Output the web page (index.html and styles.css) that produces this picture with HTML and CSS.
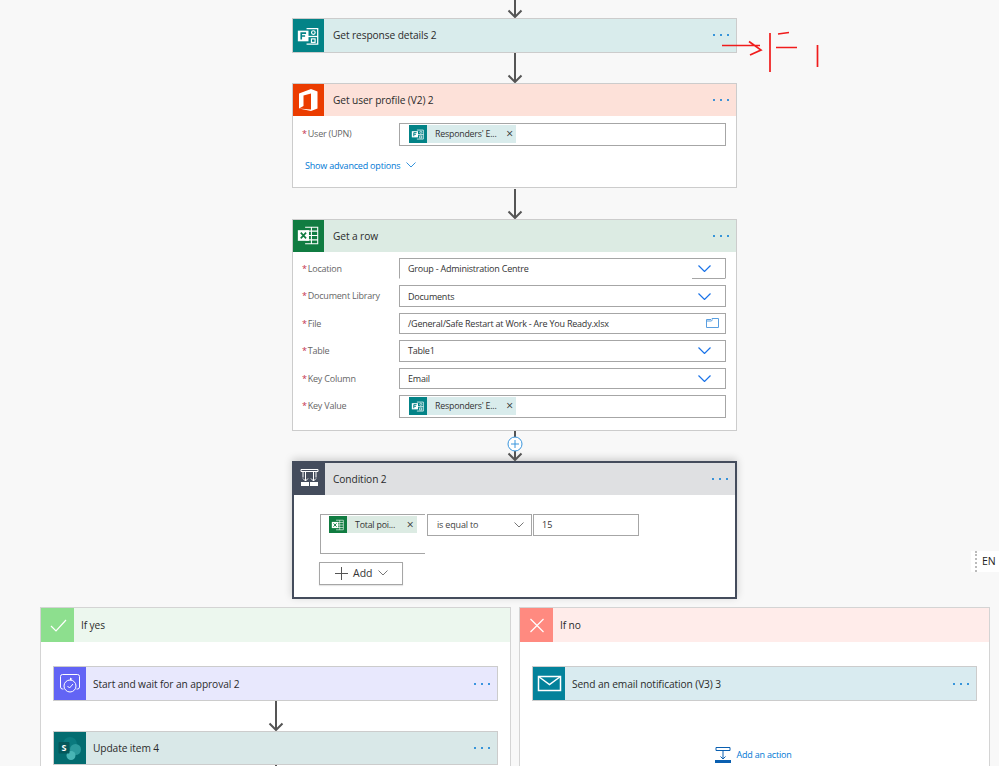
FILE: index.html
```html
<!DOCTYPE html>
<html lang="en">
<head>
<meta charset="utf-8">
<title>Flow</title>
<link rel="stylesheet" href="styles.css">
</head>
<body>
<svg class="defs" width="0" height="0" aria-hidden="true">
  <symbol id="i-forms" viewBox="0 0 32 32">
    <path d="M14 9h11.500v16H14" fill="none" stroke="#fff" stroke-width="1.300"/>
    <path d="M15 17h10.500" stroke="#fff" stroke-width="1.300"/>
    <circle cx="21" cy="13" r="1.900" fill="none" stroke="#fff" stroke-width="1.200"/>
    <rect x="19" y="19.500" width="3.800" height="3.600" fill="none" stroke="#fff" stroke-width="1.200"/>
    <rect x="5" y="11" width="11" height="11" fill="#fff"/>
    <path d="M8.500 20v-6.500h5M8.500 16.500h4" fill="none" stroke="#038387" stroke-width="1.700"/>
  </symbol>
  <symbol id="i-excel" viewBox="0 0 32 32">
    <path d="M12.500 7.500h13v17h-13M19 7.500v17M13 11.500h12.500M13 16h12.500M13 20.500h12.500" fill="none" stroke="#fff" stroke-width="1.100"/>
    <rect x="5" y="10.500" width="11.500" height="11" fill="#fff"/>
    <path d="M8 13l5.500 6M13.500 13L8 19" stroke="#107c41" stroke-width="1.700"/>
  </symbol>
  <symbol id="i-chev" viewBox="0 0 13 7">
    <path d="M.5.500l6 6 6-6" fill="none" stroke="#1a73e8" stroke-width="1.200"/>
  </symbol>
</svg>

<main class="canvas">
  <div class="column">
    <div class="conn conn-top"><svg class="arrow" width="16" height="18" viewBox="0 0 16 18"><path d="M8 0v17M1.500 10.500L8 17l6.500-6.500" fill="none" stroke="#555" stroke-width="2"/></svg></div>

    <section class="card">
      <header class="head head-forms">
        <span class="badge badge-forms"><svg width="31" height="33"><use href="#i-forms"/></svg></span>
        <span class="title">Get response details 2</span>
        <span class="dots"><i></i><i></i><i></i></span>
      </header>
    </section>

    <div class="conn"><svg class="arrow" width="16" height="30" viewBox="0 0 16 30"><path d="M8 0v29M1.500 22.500L8 29l6.500-6.500" fill="none" stroke="#555" stroke-width="2"/></svg></div>

    <section class="card">
      <header class="head head-office">
        <span class="badge badge-office"><svg width="31" height="33" viewBox="0 0 31 33"><path d="M6 25.500V10.500L18 6l6.500 2.500v17L18 28 6 25.500l12 1V10.500l-7.500 2v10.500z" fill="#fff" fill-rule="evenodd"/></svg></span>
        <span class="title">Get user profile (V2) 2</span>
        <span class="dots"><i></i><i></i><i></i></span>
      </header>
      <div class="body body-profile">
        <div class="row">
          <label class="label"><em>*</em>User (UPN)</label>
          <div class="field field-token">
            <span class="token"><span class="token-ic"><svg width="18" height="18" viewBox="0 0 32 32"><use href="#i-forms"/></svg></span><span class="token-text">Responders' E...</span><span class="token-x">×</span></span>
          </div>
        </div>
        <a class="advanced">Show advanced options <svg width="10" height="6" viewBox="0 0 10 6"><path d="M.5.500L5 5l4.500-4.500" fill="none" stroke="#0078d4" stroke-width=".8"/></svg></a>
      </div>
    </section>

    <div class="conn conn-wide"><svg class="arrow" width="16" height="30" viewBox="0 0 16 30"><path d="M8 0v29M1.500 22.500L8 29l6.500-6.500" fill="none" stroke="#555" stroke-width="2"/></svg></div>

    <section class="card">
      <header class="head head-excel">
        <span class="badge badge-excel"><svg width="31" height="33"><use href="#i-excel"/></svg></span>
        <span class="title">Get a row</span>
        <span class="dots"><i></i><i></i><i></i></span>
      </header>
      <div class="body body-row">
        <div class="row">
          <label class="label"><em>*</em>Location</label>
          <div class="field field-open"><span class="val">Group - Administration Centre</span><span class="chev chev-under"><svg width="13" height="7"><use href="#i-chev"/></svg></span></div>
        </div>
        <div class="row">
          <label class="label"><em>*</em>Document Library</label>
          <div class="field"><span class="val">Documents</span><span class="chev"><svg width="13" height="7"><use href="#i-chev"/></svg></span></div>
        </div>
        <div class="row">
          <label class="label"><em>*</em>File</label>
          <div class="field"><span class="val">/General/Safe Restart at Work - Are You Ready.xlsx</span><span class="chev chev-folder"><svg width="13" height="10" viewBox="0 0 13 10"><path d="M.5 9.500v-8h4.500l1-1h6.500v9zM.5 3h5l1-1.500" fill="none" stroke="#5a9fe0"/></svg></span></div>
        </div>
        <div class="row">
          <label class="label"><em>*</em>Table</label>
          <div class="field"><span class="val">Table1</span><span class="chev"><svg width="13" height="7"><use href="#i-chev"/></svg></span></div>
        </div>
        <div class="row">
          <label class="label"><em>*</em>Key Column</label>
          <div class="field"><span class="val">Email</span><span class="chev"><svg width="13" height="7"><use href="#i-chev"/></svg></span></div>
        </div>
        <div class="row">
          <label class="label"><em>*</em>Key Value</label>
          <div class="field field-token">
            <span class="token"><span class="token-ic"><svg width="18" height="18" viewBox="0 0 32 32"><use href="#i-forms"/></svg></span><span class="token-text">Responders' E...</span><span class="token-x">×</span></span>
          </div>
        </div>
      </div>
    </section>

    <div class="conn conn-plus">
      <svg class="arrow" width="16" height="30" viewBox="0 0 16 30"><path d="M8 0v29M1.500 22.500L8 29l6.500-6.500" fill="none" stroke="#555" stroke-width="2"/></svg>
      <svg class="plus" width="16" height="16" viewBox="0 0 16 16"><circle cx="8" cy="8" r="7" fill="#fff" stroke="#3a96dd"/><path d="M8 4v8M4 8h8" stroke="#3a96dd"/></svg>
    </div>

    <section class="card card-cond">
      <header class="head head-cond">
        <span class="badge badge-cond"><svg width="31" height="32" viewBox="0 0 31 32"><path d="M7 6.500h17v2H7zM9 8.500v6M22 8.500v6M11.500 8.500v9.500M19.500 8.500V18" fill="none" stroke="#fff"/><path d="M9 15.500l2.500 2.500 2.500-2.500M17 15.500l2.500 2.500 2.500-2.500" fill="none" stroke="#fff"/><rect x="7" y="19" width="8" height="4" fill="#fff"/><rect x="16" y="19" width="8" height="4" fill="#fff"/></svg></span>
        <span class="title">Condition 2</span>
        <span class="dots"><i></i><i></i><i></i></span>
      </header>
      <div class="body body-cond">
        <div class="cond-row">
          <div class="cond-left">
            <span class="token token-green"><span class="token-ic token-ic-green"><svg width="18" height="18" viewBox="0 0 32 32"><use href="#i-excel"/></svg></span><span class="token-text">Total poi...</span><span class="token-x">×</span></span>
          </div>
          <div class="cond-op"><span>is equal to</span><svg width="10" height="6" viewBox="0 0 10 6"><path d="M.5.500L5 5l4.500-4.500" fill="none" stroke="#777"/></svg></div>
          <div class="cond-val">15</div>
        </div>
        <div class="add-btn"><svg width="13" height="13" viewBox="0 0 13 13"><path d="M6.500 0v13M0 6.500h13" stroke="#555"/></svg><span>Add</span><svg width="10" height="6" viewBox="0 0 10 6"><path d="M.5.500L5 5l4.500-4.500" fill="none" stroke="#777"/></svg></div>
      </div>
    </section>
  </div>

  <div class="branches">
    <section class="branch">
      <header class="head head-yes">
        <span class="badge badge-yes"><svg width="32" height="33" viewBox="0 0 32 33"><path d="M9 17l5 5L24 11" fill="none" stroke="#fff" stroke-width="1.200"/></svg></span>
        <span class="title title-in">If yes</span>
      </header>
      <div class="branch-body">
        <section class="card">
          <header class="head head-approval">
            <span class="badge badge-approval"><svg width="32" height="33" viewBox="0 0 32 33"><path d="M9.500 22H8.500a2 2 0 0 1-2-2V9.500a2 2 0 0 1 2-2h15a2 2 0 0 1 2 2V20a2 2 0 0 1-2 2h-1" fill="none" stroke="#fff"/><circle cx="16" cy="19" r="6" fill="#6264f5" stroke="#fff"/><path d="M13.500 19l2 2 3.500-4" fill="none" stroke="#fff"/><path d="M16 10.500l2.500 1.500-2.500 1.500z" fill="#fff"/></svg></span>
            <span class="title title-in">Start and wait for an approval 2</span>
            <span class="dots"><i></i><i></i><i></i></span>
          </header>
        </section>
        <div class="conn-in"><svg class="arrow" width="16" height="30" viewBox="0 0 16 30"><path d="M8 0v29M1.500 22.500L8 29l6.500-6.500" fill="none" stroke="#555" stroke-width="2"/></svg></div>
        <section class="card">
          <header class="head head-sp">
            <span class="badge badge-sp"><svg width="32" height="33" viewBox="0 0 32 33"><circle cx="16" cy="12" r="7" fill="#0a7a7e"/><circle cx="21.500" cy="17.500" r="5.500" fill="#2b9a9c"/><circle cx="17" cy="23.500" r="4.500" fill="#48b5b5"/><rect x="4.500" y="10" width="11" height="11.500" rx="1" fill="#04585b"/><text class="sp-s" x="10" y="19">S</text></svg></span>
            <span class="title title-in">Update item 4</span>
            <span class="dots"><i></i><i></i><i></i></span>
          </header>
        </section>
        <div class="conn-in conn-tail"><svg width="16" height="4" viewBox="0 0 16 4"><path d="M8 0v4" stroke="#555" stroke-width="2"/></svg></div>
      </div>
    </section>

    <section class="branch">
      <header class="head head-no">
        <span class="badge badge-no"><svg width="32" height="33" viewBox="0 0 32 33"><path d="M9.500 10l13 13M22.500 10l-13 13" fill="none" stroke="#fff" stroke-width="1.200"/></svg></span>
        <span class="title title-in">If no</span>
      </header>
      <div class="branch-body">
        <section class="card">
          <header class="head head-mail">
            <span class="badge badge-mail"><svg width="32" height="33" viewBox="0 0 32 33"><path d="M5.500 9.500h22v14h-22z" fill="none" stroke="#fff" stroke-width="1.500"/><path d="M5.500 9.500l11 8 11-8" fill="none" stroke="#fff" stroke-width="1.500"/></svg></span>
            <span class="title title-in">Send an email notification (V3) 3</span>
            <span class="dots"><i></i><i></i><i></i></span>
          </header>
        </section>
        <a class="add-action"><svg width="16" height="16" viewBox="0 0 16 16"><path d="M1 .500h14v3H1zM8 3.500v8M5.500 9.500L8 12l2.500-2.500" fill="none" stroke="#0a5fb0"/><rect y="13" width="16" height="3" fill="#0a5fb0"/></svg><span>Add an action</span></a>
      </div>
    </section>
  </div>

  <div class="lang"><span>EN</span></div>

  <svg class="scribble" width="110" height="50" viewBox="0 0 110 50"><path d="M2 14.500h38M29 10.500l12 8.500-11 5M50 2v39M58 3l11-1.500M56 16.500h21M97.500 14v22" fill="none" stroke="#f01c1c" stroke-width="1.700"/></svg>
</main>
</body>
</html>
```
FILE: styles.css
```css
* { box-sizing: border-box; }
html, body { margin: 0; padding: 0; }
body {
  width: 999px;
  height: 766px;
  overflow: hidden;
  background: #f8f8f8;
  color: #2b2b2b;
  font-family: "Open Sans", "Noto Sans", sans-serif;
  font-size: 9px;
}
.defs { position: absolute; }
.canvas { position: relative; width: 999px; height: 766px; overflow: hidden; }

.column { width: 445px; margin-left: 292px; display: flex; flex-direction: column; }
.conn { height: 30px; display: flex; justify-content: center; position: relative; }
.conn-top { height: 18px; }
.conn-wide { height: 31px; align-items: flex-end; }
.conn-plus { height: 30px; align-items: flex-end; }
.arrow { display: block; }
.plus { position: absolute; left: 215px; top: 4.500px; }

.card { background: #fff; border: 1px solid #ccc; }
.card-cond { border: 2px solid #444c5c; height: 138px; box-shadow: 0 -2px 8px rgba(0,0,0,.18); }

.head { display: flex; align-items: center; height: 32.500px; }
.badge { width: 31px; height: 100%; flex: none; display: flex; align-items: center; justify-content: center; }
.badge svg { display: block; }
.title { margin-left: 9px; flex: 1; font-size: 10.200px; letter-spacing: -.1px; color: #2b2b2b; white-space: nowrap; }
.title-in { margin-left: 7px; }
.dots { display: flex; gap: 4.500px; margin-right: 7px; }
.dots i { width: 2.400px; height: 2.400px; border-radius: 50%; background: #0078d4; display: block; }

.head-forms { background: #d9ecec; }
.badge-forms { background: #038387; }
.head-office { background: #fde1d9; }
.badge-office { background: #eb3c00; }
.head-excel { background: #dcebe3; }
.badge-excel { background: #107c41; }
.head-cond { background: #dfe0e2; height: 31.500px; }
.head-cond .title { margin-left: 8px; }
.badge-cond { background: #444c5c; }
.head-yes { background: #ecf7ee; height: 34px; }
.badge-yes { background: #8ddf8e; width: 33px; }
.head-no { background: #ffecea; height: 34px; }
.badge-no { background: #ff8a80; width: 33px; }
.head-approval { background: #e8e8fd; }
.badge-approval { background: #6264f5; width: 32px; }
.head-sp { background: #d9e8e8; }
.badge-sp { background: #036c70; width: 32px; }
.head-mail { background: #d9ebf0; }
.badge-mail { background: #03829b; width: 32px; }
.sp-s { font-size: 9px; font-weight: 700; fill: #fff; text-anchor: middle; }

.body-profile { padding: 6.500px 10px 0 9px; height: 70.500px; }
.body-row { padding: 6px 10px 12.500px 9px; display: flex; flex-direction: column; gap: 6px; }
.row { display: flex; align-items: flex-start; }
.label { width: 97px; flex: none; padding-top: 4px; color: #666; font-size: 9px; letter-spacing: -.22px; white-space: nowrap; }
.label em { color: #c4314b; font-style: normal; margin-right: 1px; }
.field {
  flex: 1;
  height: 21.400px;
  border: 1px solid #a6a6a6;
  background: #fff;
  display: flex;
  align-items: center;
  padding-left: 8px;
  white-space: nowrap;
}
.val { flex: 1; font-size: 9px; letter-spacing: -.22px; color: #333; }
.chev { width: 33px; flex: none; align-self: stretch; display: flex; align-items: center; justify-content: center; padding-right: 8px; }
.chev svg { display: block; }
.chev-folder { justify-content: flex-end; padding-right: 6px; }
.field-open { border-bottom-color: transparent; }
.chev-under { border-bottom: 1px solid #a6a6a6; margin-bottom: -1px; }
.field-token { height: 23px; padding-left: 9px; align-items: flex-start; padding-top: 1.500px; }

.token { display: inline-flex; align-items: center; height: 17.500px; width: 107px; background: #d9ecec; flex: none; }
.token-ic { width: 18px; height: 17.500px; background: #038387; flex: none; display: block; }
.token-ic svg { display: block; }
.token-text { margin-left: 8px; font-size: 8.800px; letter-spacing: -.2px; color: #333; white-space: nowrap; }
.token-x { margin-left: auto; margin-right: 3px; font-size: 12px; line-height: 1; color: #333; }
.token-green { background: #dcebe3; width: 87.500px; }
.token-ic-green { background: #107c41; }

.advanced { display: flex; align-items: center; gap: 6px; margin: 13px 0 0 3px; color: #0078d4; font-size: 9px; letter-spacing: -.2px; white-space: nowrap; }

.body-cond { padding: 19px 0 0 26px; }
.cond-row { display: flex; align-items: flex-start; }
.cond-left {
  width: 105px;
  height: 40.500px;
  border: 1px solid #a6a6a6;
  border-right: 0;
  padding: 1px 0 0 8px;
}
.cond-op {
  width: 105px;
  height: 22px;
  margin-left: 2px;
  border: 1px solid #a6a6a6;
  display: flex;
  align-items: center;
  justify-content: space-between;
  padding: 0 7px 0 9px;
  font-size: 9px;
  letter-spacing: -.18px;
  color: #444;
}
.cond-val {
  width: 106px;
  height: 22px;
  margin-left: 1px;
  border: 1px solid #a6a6a6;
  display: flex;
  align-items: center;
  padding-left: 8px;
  font-size: 9px;
  color: #333;
}
.add-btn {
  width: 84px;
  height: 23px;
  margin-top: 7.500px;
  margin-left: -1px;
  border: 1px solid #a6a6a6;
  display: flex;
  align-items: center;
  padding-left: 15px;
  gap: 5px;
  font-size: 10.500px;
  color: #333;
  box-shadow: 0 1px 1px rgba(0,0,0,.1);
}

.branches { display: grid; grid-template-columns: 471px 471px; gap: 8px; margin: 8px 0 0 40px; }
.branch { background: #fff; border: 1px solid #d4d4d4; height: 200px; }
.branch-body { padding: 24px 12px 0; display: flex; flex-direction: column; }
.conn-in { height: 30px; display: flex; justify-content: center; }
.conn-tail { height: 4px; }
.add-action { display: flex; align-items: center; justify-content: center; gap: 5px; margin: 46px 0 0 -2px; color: #0078d4; font-size: 9px; letter-spacing: -.2px; }

.lang {
  position: absolute;
  left: 971px;
  top: 551px;
  width: 28px;
  height: 21px;
  background: #fff;
  padding-left: 4px;
  font-size: 10.500px;
  line-height: 20px;
  color: #222;
}
.lang span { display: block; height: 100%; border-left: 2px dotted #bbb; padding-left: 5px; }
.scribble { position: absolute; left: 720px; top: 31px; }
```
